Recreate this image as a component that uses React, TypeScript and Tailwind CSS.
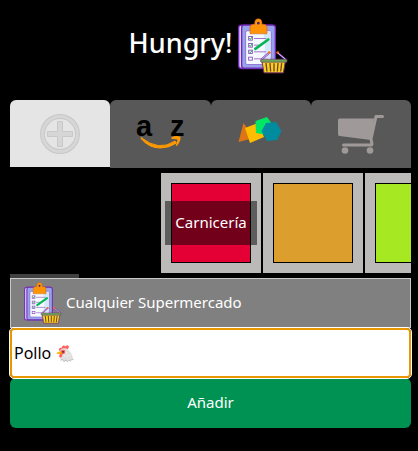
import { useState } from "react";

function ListLogo({ className }: { className: string }) {
  return (
    <svg viewBox="19 10 150 167" className={className} aria-hidden="true">
      <rect x="21" y="31" width="108" height="130" rx="8" fill="#d9d6ff" stroke="#7228b4" strokeWidth="4" />
      <path d="M37 31H123Q131 31 131 39V153Q131 160 123 160H37Q30 160 30 153V39Q30 31 37 31Z" fill="#98a3ea" stroke="#7228b4" strokeWidth="4" />
      <rect x="42" y="48" width="76" height="101" rx="5" fill="#f4f8ff" stroke="#7d4fc6" strokeWidth="2" />
      <path d="M94 49H117V125L90 148Q108 100 94 49Z" fill="#d5e8fb" />
      <path d="M55 39Q55 28 65 28H69Q68 12 80 12Q92 12 91 28H96Q106 28 106 39V57H55Z" fill="#ff9408" stroke="#b95a22" strokeWidth="1.5" />
      <circle cx="80" cy="25" r="4" fill="#4b246e" />
      <g fill="#fff" stroke="#8741b8" strokeWidth="2.5">
        <rect x="51" y="65" width="11" height="11" />
        <rect x="51" y="86" width="11" height="11" />
        <rect x="51" y="106" width="11" height="10" />
        <rect x="51" y="127" width="11" height="9" />
      </g>
      <path d="M53 70L56 74L62 65M53 91L56 95L62 86M53 110L56 114L62 106" fill="none" stroke="#2aa85b" strokeWidth="3" />
      <path d="M67 71H104M67 91H82M67 111H103M67 132H89" stroke="#9158c4" strokeWidth="2.5" />
      <path d="M71 102L110 74" stroke="#07b653" strokeWidth="8" strokeLinecap="round" />
      <path d="M90 134L113 113M162 134L137 113" stroke="#7228b4" strokeWidth="6" />
      <path d="M90 134L113 113M162 134L137 113" stroke="#fff" strokeWidth="2.5" />
      <circle cx="113" cy="113" r="4" fill="#ff6b13" />
      <circle cx="138" cy="113" r="4" fill="#ff6b13" />
      <path d="M91 140H161L155 174H97Z" fill="#f5d51b" stroke="#7c326e" strokeWidth="3" />
      <path d="M103 145L106 170M115 145L117 170M127 145V170M139 145L137 170M150 145L147 170" stroke="#7c3d31" strokeWidth="4" />
      <rect x="87" y="133" width="79" height="9" rx="2" fill="#6aaa55" stroke="#74346e" strokeWidth="2" />
    </svg>
  );
}

function AddIcon() {
  return (
    <svg viewBox="0 0 40 40" className="size-10" aria-hidden="true">
      <circle cx="20" cy="20" r="17.5" fill="none" stroke="#c8c8c8" strokeWidth="5" />
      <circle cx="20" cy="20" r="17.5" fill="none" stroke="#d6d6d6" strokeWidth="3" />
      <path d="M17.5 7.5H22.5V17.5H32.5V22.5H22.5V32.5H17.5V22.5H7.5V17.5H17.5Z" fill="#d6d6d6" stroke="#c8c8c8" />
    </svg>
  );
}

function AmazonIcon() {
  return (
    <svg viewBox="0 0 50 50" className="size-[50px] overflow-visible" aria-hidden="true">
      <text x="1" y="27" fontSize="29" fontWeight="700" className="font-['Liberation_Sans_Narrow','Liberation_Sans',sans-serif]">a</text>
      <text x="35" y="27" fontSize="29" fontWeight="700" className="font-['Liberation_Sans_Narrow','Liberation_Sans',sans-serif]">z</text>
      <path d="M6 28.500Q24 43 40 32L41.500 34Q34 39 25 39Q14 39 6 29.500Z" fill="#ff9900" stroke="#ff9900" strokeWidth="1" />
      <path d="M36.500 28.500Q41 26 45.500 27.800Q46 32.500 41.800 37L40.700 36.500Q42.800 32 42.200 30.500Q41 29.700 36.500 30Z" fill="#ff9900" />
    </svg>
  );
}

function ShapesIcon() {
  return (
    <svg viewBox="0 0 44 28" className="mr-0.5 mb-2 h-7 w-11" aria-hidden="true">
      <path d="M5.500 7L0.500 26L16 22Z" fill="#df7415" />
      <path d="M7 12L20 7L26 21L12 27Z" fill="#ffbd00" />
      <path d="M17.500 5L29 1L35 9L29 19L18 17Z" fill="#00e765" />
      <path d="M28 7L38 6L43.500 15L39 24L29 25L23.500 15Z" fill="#008b9f" />
    </svg>
  );
}

function CartIcon() {
  return (
    <svg viewBox="0 0 46 40" className="h-10 w-[46px]" aria-hidden="true">
      <path d="M2 4.500H36L33 26L1.500 22Q0 22 0 20V6Q0 4.500 2 4.500Z" fill="#a09999" />
      <path d="M44.500 2.500H38L33 25L34 30M5.500 31H33.500" fill="none" stroke="#a09999" strokeWidth="3" strokeLinecap="round" strokeLinejoin="round" />
      <circle cx="7" cy="36.500" r="3.300" fill="#a09999" />
      <circle cx="32" cy="36.500" r="3.300" fill="#a09999" />
    </svg>
  );
}

const tabs = [
  { name: "Nuevo", icon: <AddIcon />, style: "mb-px bg-[#e5e5e5]" },
  { name: "Alfabético", icon: <AmazonIcon />, style: "bg-[#585858]" },
  { name: "Categorías", icon: <ShapesIcon />, style: "bg-[#585858]" },
  { name: "Carrito", icon: <CartIcon />, style: "bg-[#585858]" },
];

const categories = [
  { name: "Carnicería", label: true, color: "bg-[#e40035]" },
  { name: "Panadería", label: false, color: "bg-[#dc9e2c]" },
  { name: "Verdulería", label: false, color: "bg-[#a6e822]" },
];

export default function App() {
  const [item, setItem] = useState("Pollo 🐔");

  return (
    <main className="min-h-screen bg-black pr-[7px] pb-6 pl-[10px] font-['Noto_Sans','Noto_Color_Emoji',sans-serif] text-[15px] text-white">
      <header className="flex h-[100px] items-center justify-center gap-1.5 pr-1 pb-2">
        <h1 className="pb-1.5 text-[27px] leading-9 font-medium">Hungry!</h1>
        <ListLogo className="h-14 w-[50px]" />
      </header>

      <nav className="grid h-[68px] grid-cols-4">
        {tabs.map((tab) => (
          <button key={tab.name} type="button" aria-label={tab.name} className={`flex items-center justify-center rounded-t-md ${tab.style}`}>
            {tab.icon}
          </button>
        ))}
      </nav>

      <div className="mt-[5px] flex gap-0.5 overflow-hidden pl-[151px]">
        {categories.map((category) => (
          <button key={category.name} type="button" aria-label={category.name} className="relative size-[100px] shrink-0 bg-[#bbbab8] p-[10px]">
            <span className={`block size-full border border-black ${category.color}`} />
            {category.label && (
              <span className="absolute inset-x-1 top-7 flex h-11 items-center justify-center bg-black/50 pb-0.5">{category.name}</span>
            )}
          </button>
        ))}
      </div>

      <div className="mt-px h-1 w-[69px] bg-[#414141]" />
      <form onSubmit={(event) => event.preventDefault()}>
        <button type="button" className="flex h-[50px] w-full items-center gap-1 border border-[#c8c8c8] bg-[#808080] pl-[13px] text-left">
          <ListLogo className="h-[42px] w-[38px]" />
          <span className="pb-0.5">Cualquier Supermercado</span>
        </button>
        <input
          aria-label="Producto"
          value={item}
          onChange={(event) => setItem(event.target.value)}
          className="relative block h-[50px] w-full rounded-sm border-2 border-[#e99700] bg-white px-0.5 text-base text-black outline outline-white"
        />
        <button type="submit" className="block h-[50px] w-full rounded-md bg-[#009252] pb-0.5">Añadir</button>
      </form>
    </main>
  );
}
